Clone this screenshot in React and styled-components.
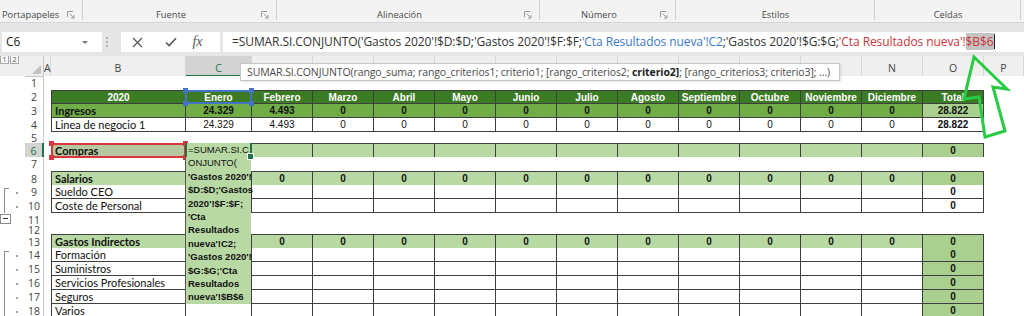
import React from 'react'
import styled, { createGlobalStyle, css } from 'styled-components'

const UI_FONT = '"Open Sans", "Noto Sans", sans-serif'
const CELL_FONT = '"Liberation Sans", Arial, sans-serif'
const LABEL_FONT = 'Lato, "Liberation Sans", sans-serif'

const HEAD = '#3b7b24'
const MID = '#70ad47'
const LIGHT = '#b9d9a4'
const TOTAL = '#a9d08e'
const LINE = '#3f3f3f'
const XL_GREEN = '#217346'

const COLS = '25px 19px 7px 135px 66px repeat(12, 61px) 1fr'
const LETTERS = ['A', 'B', 'C', 'D', 'E', 'F', 'G', 'H', 'I', 'J', 'K', 'L', 'M', 'N', 'O', 'P']
const MONTHS = ['Enero', 'Febrero', 'Marzo', 'Abril', 'Mayo', 'Junio', 'Julio', 'Agosto', 'Septiembre', 'Octubre', 'Noviembre', 'Diciembre']

const zeros = n => Array(n).fill('0')
const blanks = n => Array(n).fill('')

const ROWS = [
  { n: 1, h: 14 },
  { n: 2, h: 14, kind: 'head', label: '2020', values: [...MONTHS, 'Total'], top: true },
  { n: 3, h: 14, kind: 'mid', label: 'Ingresos', values: ['24.329', '4.493', ...zeros(10), '28.822'] },
  { n: 4, h: 14, kind: 'plain', label: 'Linea de negocio 1', values: ['24.329', '4.493', ...zeros(10), '28.822'] },
  { n: 5, h: 11 },
  { n: 6, h: 14, kind: 'section', label: 'Compras', values: [...blanks(12), '0'], top: true, active: true },
  { n: 7, h: 14 },
  { n: 8, h: 14, kind: 'section', label: 'Salarios', values: [...zeros(12), '0'], top: true },
  { n: 9, h: 14, kind: 'item', label: 'Sueldo CEO', values: [...blanks(12), '0'], outline: 'start' },
  { n: 10, h: 14, kind: 'item', label: 'Coste de Personal', values: [...blanks(12), '0'], outline: 'mid' },
  { n: 11, h: 13, outline: 'minus' },
  { n: 12, h: 8 },
  { n: 13, h: 14, kind: 'section', label: 'Gastos Indirectos', values: [...zeros(12), '0'], top: true },
  { n: 14, h: 14, kind: 'sub', label: 'Formación', values: [...blanks(12), '0'], outline: 'start' },
  { n: 15, h: 14, kind: 'sub', label: 'Suministros', values: [...blanks(12), '0'], outline: 'mid' },
  { n: 16, h: 14, kind: 'sub', label: 'Servicios Profesionales', values: [...blanks(12), '0'], outline: 'mid' },
  { n: 17, h: 14, kind: 'sub', label: 'Seguros', values: [...blanks(12), '0'], outline: 'mid' },
  { n: 18, h: 14, kind: 'sub', label: 'Varios', values: [...blanks(12), '0'], outline: 'mid' },
]

const EDIT_LINES = [
  ['=SUMAR.SI.C', false],
  ['ONJUNTO(', false],
  ["'Gastos 2020'!", true],
  ["$D:$D;'Gastos", true],
  ["2020'!$F:$F;", true],
  ["'Cta", true],
  ['Resultados', true],
  ["nueva'!C2;", true],
  ["'Gastos 2020'!", true],
  ["$G:$G;'Cta", true],
  ['Resultados', true],
  ["nueva'!$B$6", true],
]

const GlobalStyle = createGlobalStyle`
  html, body {
    margin: 0;
    padding: 0;
    background: #fff;
  }
  body {
    width: 1024px;
    height: 316px;
    overflow: hidden;
    font-family: ${UI_FONT};
  }
`

const Window = styled.div`
  position: relative;
  width: 1024px;
  height: 316px;
  overflow: hidden;
  background: #fff;
`

/* ribbon */
const Ribbon = styled.div`
  display: flex;
  height: 22px;
  background: #f3f3f3;
  border-bottom: 1px solid #d6d6d6;
`

const Group = styled.div`
  position: relative;
  flex: none;
  box-sizing: border-box;
  width: ${p => p.$w}px;
  padding: 8px ${p => (p.$launcher ? 18 : 0)}px 0 ${p => p.$pl || 0}px;
  text-align: ${p => (p.$pl ? 'left' : 'center')};
  font-size: 9.3px;
  line-height: 13px;
  color: #4a4a4a;
  &::after {
    content: '';
    position: absolute;
    right: 0;
    top: 0;
    width: 1px;
    height: 20px;
    background: #d2d2d2;
  }
`

const Launcher = styled.svg`
  position: absolute;
  right: 8px;
  top: 11px;
`

/* formula bar */
const FormulaStrip = styled.div`
  display: flex;
  align-items: flex-start;
  box-sizing: border-box;
  height: 33px;
  padding: 9px 0 0 2px;
  background: #e6e6e6;
`

const NameBox = styled.div`
  position: relative;
  flex: none;
  box-sizing: border-box;
  width: 100px;
  height: 20px;
  padding-left: 4px;
  background: #fff;
  font-size: 12px;
  line-height: 20px;
  color: #222;
`

const Caret = styled.span`
  position: absolute;
  right: 14px;
  top: 9px;
  border-left: 3px solid transparent;
  border-right: 3px solid transparent;
  border-top: 3px solid #777;
`

const Dots = styled.div`
  flex: none;
  width: 19px;
  display: flex;
  flex-direction: column;
  align-items: flex-start;
  gap: 2px;
  padding: 5px 0 0 4px;
  box-sizing: border-box;
  span {
    width: 2px;
    height: 2px;
    background: #b4b4b4;
  }
`

const ActionBox = styled.div`
  flex: none;
  display: flex;
  width: 99px;
  height: 20px;
  background: #fff;
`

const IconSlot = styled.div`
  width: ${p => p.$w}px;
  display: flex;
  align-items: center;
  justify-content: center;
  color: #555;
`

const Fx = styled.span`
  font-family: "Liberation Serif", serif;
  font-style: italic;
  font-size: 14px;
  color: #555;
`

const FormulaInput = styled.div`
  flex: 1;
  height: 20px;
  margin-left: 3px;
  padding-left: 9px;
  background: #fff;
  font-size: 12px;
  letter-spacing: -0.09px;
  line-height: 20px;
  color: #333;
  white-space: nowrap;
  overflow: hidden;
`

const Ref = styled.span`
  color: ${p => p.$color};
  background: ${p => p.$hl || 'transparent'};
`

const Cursor = styled.span`
  display: inline-block;
  width: 1px;
  height: 15px;
  background: #222;
  vertical-align: -3px;
`

/* sheet */
const Sheet = styled.div`
  position: relative;
`

const SheetRow = styled.div`
  display: grid;
  grid-template-columns: ${COLS};
  height: ${p => p.$h}px;
`

const OutlineHead = styled.div`
  display: flex;
  gap: 1px;
  align-items: flex-start;
  background: #efefef;
`

const LevelButton = styled.span`
  box-sizing: border-box;
  width: 9px;
  height: 8px;
  border: 1px solid #a8a8a8;
  border-top: none;
  background: #f7f7f7;
  font-size: 7px;
  line-height: 7px;
  text-align: center;
  color: #555;
`

const Corner = styled.div`
  position: relative;
  background: #efefef;
  border-right: 1px solid #c8c8c8;
  border-bottom: 1px solid #c8c8c8;
  &::after {
    content: '';
    position: absolute;
    right: 2px;
    bottom: 2px;
    border-left: 9px solid transparent;
    border-bottom: 9px solid #c2c2c2;
  }
`

const ColHead = styled.div`
  box-sizing: border-box;
  padding-top: 5px;
  text-align: center;
  font-size: 10.5px;
  line-height: 14px;
  color: ${p => (p.$active ? XL_GREEN : '#444')};
  background: ${p => (p.$active ? '#d3d3d3' : '#efefef')};
  border-right: 1px solid #d6d6d6;
  border-bottom: ${p => (p.$active ? `2px solid ${XL_GREEN}` : '1px solid #c8c8c8')};
`

const OutlineCell = styled.div`
  position: relative;
  background: #fff;
  ${p => p.$dot && css`
    &::after {
      content: '';
      position: absolute;
      left: 16px;
      top: 50%;
      width: 2px;
      height: 2px;
      background: #a0a0a0;
    }
  `}
  ${p => p.$bracket && css`
    &::before {
      content: '';
      position: absolute;
      left: 4px;
      top: ${p.$bracket === 'start' ? 3 : 0}px;
      bottom: 0;
      width: 4px;
      border-left: 1px solid #8c8c8c;
      border-top: ${p.$bracket === 'start' ? '1px solid #8c8c8c' : 'none'};
    }
  `}
`

const MinusButton = styled.span`
  position: absolute;
  left: 0;
  top: 1px;
  box-sizing: border-box;
  width: 11px;
  height: 10px;
  border: 1px solid #8c8c8c;
  background: #fff;
  &::after {
    content: '';
    position: absolute;
    left: 2px;
    right: 2px;
    top: 3px;
    height: 1px;
    background: #333;
  }
`

const RowHead = styled.div`
  box-sizing: border-box;
  overflow: hidden;
  display: flex;
  align-items: center;
  justify-content: center;
  font-size: 10.5px;
  color: ${p => (p.$active ? XL_GREEN : '#444')};
  background: ${p => (p.$active ? '#d3d3d3' : '#fff')};
  border-right: ${p => (p.$active ? `2px solid ${XL_GREEN}` : '1px solid #c8c8c8')};
`

const Cell = styled.div`
  position: relative;
  box-sizing: border-box;
  min-width: 0;
  display: flex;
  align-items: center;
  justify-content: ${p => (p.$left ? 'flex-start' : 'center')};
  padding-left: ${p => (p.$left ? 3 : 0)}px;
  background: ${p => p.$bg || '#fff'};
  color: ${p => p.$color || '#111'};
  font-family: ${p => (p.$label ? LABEL_FONT : CELL_FONT)};
  font-size: ${p => (p.$label ? 11 : 10)}px;
  font-weight: ${p => (p.$bold ? 700 : 400)};
  white-space: nowrap;
  ${p => p.$boxed && css`
    border-right: 1px solid ${LINE};
    border-bottom: 1px solid ${LINE};
  `}
  ${p => p.$top && css`border-top: 1px solid ${LINE};`}
  ${p => p.$first && css`border-left: 1px solid ${LINE};`}
`

const RefFrame = styled.div`
  position: absolute;
  left: -1px;
  right: -1px;
  top: -1px;
  bottom: -1px;
  border: 2px solid ${p => p.$color};
  z-index: 2;
`

const Handle = styled.span`
  position: absolute;
  width: 5px;
  height: 5px;
  background: ${p => p.$color};
  ${p => (p.$v === 't' ? 'top: -4px;' : 'bottom: -4px;')}
  ${p => (p.$h === 'l' ? 'left: -4px;' : 'right: -4px;')}
`

const EditBox = styled.div`
  position: absolute;
  left: 185px;
  top: 87px;
  width: 66px;
  height: 161px;
  box-sizing: border-box;
  padding-left: 2px;
  background: ${LIGHT};
  border-left: 1px solid #555;
  z-index: 3;
`

const ActiveFrame = styled.div`
  position: absolute;
  left: -1px;
  top: 0;
  width: 67px;
  height: 14px;
  box-sizing: border-box;
  border-left: 2px solid ${XL_GREEN};
  border-right: 2px solid ${XL_GREEN};
  &::after {
    content: '';
    position: absolute;
    right: -4px;
    bottom: -3px;
    width: 5px;
    height: 5px;
    background: ${XL_GREEN};
    border: 1px solid #fff;
  }
`

const EditLine = styled.div`
  height: 13.4px;
  line-height: 13.4px;
  font-family: ${CELL_FONT};
  font-size: 9.5px;
  font-weight: ${p => (p.$bold ? 700 : 400)};
  color: #111;
  white-space: nowrap;
`

const Tooltip = styled.div`
  position: absolute;
  left: 240px;
  top: 63px;
  width: 600px;
  height: 18px;
  box-sizing: border-box;
  padding-left: 6px;
  background: #fff;
  border: 1px solid #c6c6c6;
  box-shadow: 1px 1px 2px rgba(0, 0, 0, 0.12);
  font-size: 10.5px;
  letter-spacing: -0.1px;
  line-height: 16px;
  color: #4a4a4a;
  white-space: nowrap;
  z-index: 5;
  b {
    color: #222;
  }
`

const Arrow = styled.svg`
  position: absolute;
  left: 950px;
  top: 50px;
  z-index: 6;
`

const X = () => (
  <svg width="11" height="11" viewBox="0 0 11 11">
    <path d="M1 1 L10 10 M10 1 L1 10" stroke="#555" strokeWidth="1.2" fill="none" />
  </svg>
)

const Check = () => (
  <svg width="12" height="10" viewBox="0 0 12 10">
    <path d="M1 5.5 L4.2 8.5 L11 1.2" stroke="#555" strokeWidth="1.6" fill="none" />
  </svg>
)

const LauncherIcon = () => (
  <Launcher width="8" height="8" viewBox="0 0 8 8">
    <path d="M0.5 6 V0.5 H6" stroke="#999" fill="none" />
    <path d="M2.5 2.5 L7 7 M7 4 V7 H4" stroke="#999" fill="none" />
  </Launcher>
)

const cellProps = (kind, i) => {
  const total = i === 13
  switch (kind) {
    case 'head':
      return { $bg: HEAD, $color: '#fff', $bold: true }
    case 'mid':
      return { $bg: total ? TOTAL : MID, $bold: true }
    case 'section':
      return { $bg: total ? TOTAL : LIGHT, $bold: true }
    case 'sub':
      return { $bg: total ? TOTAL : '#fff', $bold: total }
    default:
      return { $bold: total }
  }
}

const Frame = ({ color }) => (
  <RefFrame $color={color}>
    <Handle $color={color} $v="t" $h="l" />
    <Handle $color={color} $v="t" $h="r" />
    <Handle $color={color} $v="b" $h="l" />
    <Handle $color={color} $v="b" $h="r" />
  </RefFrame>
)

const DataRow = ({ row }) => {
  const boxed = !!row.kind
  const outline = row.outline
  return (
    <SheetRow $h={row.h}>
      <OutlineCell
        $dot={outline === 'start' || outline === 'mid'}
        $bracket={outline === 'start' || outline === 'mid' ? outline : null}
      >
        {outline === 'minus' && <MinusButton />}
      </OutlineCell>
      <RowHead $active={row.active}>{row.n}</RowHead>
      <Cell />
      {boxed ? (
        <>
          <Cell
            $boxed
            $first
            $top={row.top}
            $left={row.kind !== 'head'}
            $label={row.kind !== 'head'}
            {...cellProps(row.kind, 0)}
            $bold={['head', 'mid', 'section'].includes(row.kind)}
            $bg={row.n === 6 ? '#b6c89f' : cellProps(row.kind, 0).$bg}
          >
            {row.label}
            {row.n === 6 && <Frame color="#d9363e" />}
          </Cell>
          {row.values.map((v, i) => (
            <Cell key={i} $boxed $top={row.top} {...cellProps(row.kind, i + 1)}>
              {v}
              {row.n === 2 && i === 0 && <Frame color="#4472c4" />}
            </Cell>
          ))}
        </>
      ) : (
        <>
          <Cell />
          {blanks(13).map((v, i) => <Cell key={i} />)}
        </>
      )}
      <Cell />
    </SheetRow>
  )
}

export default function App() {
  return (
    <Window>
      <GlobalStyle />
      <Ribbon>
        <Group $w={83} $pl={2} $launcher>
          Portapapeles
          <LauncherIcon />
        </Group>
        <Group $w={194} $launcher>
          Fuente
          <LauncherIcon />
        </Group>
        <Group $w={263} $launcher>
          Alineación
          <LauncherIcon />
        </Group>
        <Group $w={136} $launcher>
          Número
          <LauncherIcon />
        </Group>
        <Group $w={199}>Estilos</Group>
        <Group $w={146}>Celdas</Group>
      </Ribbon>

      <FormulaStrip>
        <NameBox>
          C6
          <Caret />
        </NameBox>
        <Dots>
          <span />
          <span />
          <span />
        </Dots>
        <ActionBox>
          <IconSlot $w={33}>
            <X />
          </IconSlot>
          <IconSlot $w={33}>
            <Check />
          </IconSlot>
          <IconSlot $w={21}>
            <Fx>fx</Fx>
          </IconSlot>
        </ActionBox>
        <FormulaInput>
          =SUMAR.SI.CONJUNTO('Gastos 2020'!$D:$D;'Gastos 2020'!$F:$F;
          <Ref $color="#3a78c9">'Cta Resultados nueva'!C2</Ref>
          ;'Gastos 2020'!$G:$G;
          <Ref $color="#c8353a">'Cta Resultados nueva'!</Ref>
          <Ref $color="#c8353a" $hl="#c4c4c4">$B$6</Ref>
          <Cursor />
        </FormulaInput>
      </FormulaStrip>

      <Sheet>
        <SheetRow $h={20}>
          <OutlineHead>
            <LevelButton>1</LevelButton>
            <LevelButton>2</LevelButton>
          </OutlineHead>
          <Corner />
          {LETTERS.map(l => (
            <ColHead key={l} $active={l === 'C'}>
              {l}
            </ColHead>
          ))}
        </SheetRow>
        {ROWS.map(r => (
          <DataRow key={r.n} row={r} />
        ))}

        <EditBox>
          <ActiveFrame />
          {EDIT_LINES.map(([t, b], i) => (
            <EditLine key={i} $bold={b}>
              {t}
            </EditLine>
          ))}
        </EditBox>
      </Sheet>

      <Tooltip>
        SUMAR.SI.CONJUNTO(rango_suma; rango_criterios1; criterio1; [rango_criterios2; <b>criterio2]</b>; [rango_criterios3; criterio3]; ...)
      </Tooltip>

      <Arrow width="70" height="95" viewBox="0 0 70 95">
        <polygon
          points="24,7 57,39 43,37 55,81 35,87 29,47 14,49"
          fill="none"
          stroke="#27cc43"
          strokeWidth="3"
          strokeLinejoin="miter"
        />
      </Arrow>
    </Window>
  )
}
